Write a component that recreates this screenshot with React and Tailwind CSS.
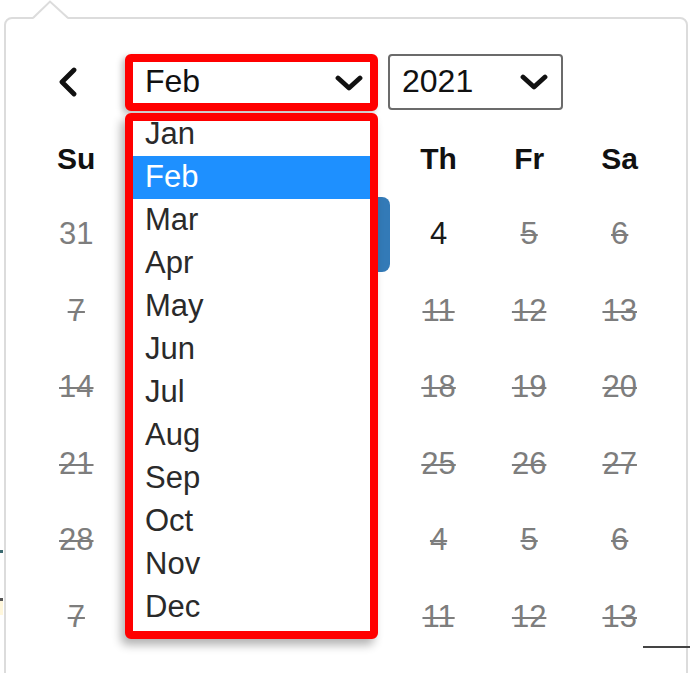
import React from 'react'

const months = ['Jan', 'Feb', 'Mar', 'Apr', 'May', 'Jun', 'Jul', 'Aug', 'Sep', 'Oct', 'Nov', 'Dec']
// Mo, Tu, We sit under the open month list
const dayNames = [['Su', true], ['Mo', false], ['Tu', false], ['We', false], ['Th', true], ['Fr', true], ['Sa', true]]

// o = outside month (gray, enabled), x = disabled (struck), s = selected, h = under the open list
const weeks = [
  [['31', 'o'], ['1', 'h'], ['2', 'h'], ['3', 's'], ['4', ''], ['5', 'x'], ['6', 'x']],
  [['7', 'x'], ['8', 'h'], ['9', 'h'], ['10', 'h'], ['11', 'x'], ['12', 'x'], ['13', 'x']],
  [['14', 'x'], ['15', 'h'], ['16', 'h'], ['17', 'h'], ['18', 'x'], ['19', 'x'], ['20', 'x']],
  [['21', 'x'], ['22', 'h'], ['23', 'h'], ['24', 'h'], ['25', 'x'], ['26', 'x'], ['27', 'x']],
  [['28', 'x'], ['1', 'h'], ['2', 'h'], ['3', 'h'], ['4', 'x'], ['5', 'x'], ['6', 'x']],
  [['7', 'x'], ['8', 'h'], ['9', 'h'], ['10', 'h'], ['11', 'x'], ['12', 'x'], ['13', 'x']],
]

function Chevron({ className }) {
  return (
    <svg viewBox="0 0 28 16" className={className} fill="none" stroke="#111" strokeWidth="4.8" strokeLinecap="round" strokeLinejoin="round">
      <path d="M3 3 L14 13 L25 3" />
    </svg>
  )
}

function Day({ text, kind }) {
  if (kind === 's') {
    return (
      <div className="mx-[3px] h-[75px] rounded-lg bg-[#337ab7] flex items-center justify-center text-white">
        {text}
      </div>
    )
  }
  if (kind === 'h') return <div className="h-full" />
  let cls = 'text-[#1a1a1a]'
  if (kind === 'o') cls = 'text-[#7d7d7d]'
  if (kind === 'x') cls = 'text-[#7d7d7d] line-through decoration-[#7d7d7d] decoration-2'
  return (
    <div className="h-full flex items-center justify-center">
      <span className={cls}>{text}</span>
    </div>
  )
}

export default function App() {
  return (
    <div className="relative w-[690px] h-[673px] bg-white overflow-hidden font-['Liberation_Sans',Arial,sans-serif]">
      <div className="ml-[4px] mt-[17px] w-[684px] h-[700px] border-2 border-[#dcdcdc] rounded-lg bg-white">
        <div className="flex items-start pt-[35px] pl-[51px]">
          <svg viewBox="0 0 22 30" className="w-[22px] h-[30px] mt-[13px]" fill="none" stroke="#111" strokeWidth="4.8" strokeLinecap="round" strokeLinejoin="round">
            <path d="M17 3 L5 15 L17 27" />
          </svg>
          <div className="ml-[46px] w-[253px] h-[57px] border-[8px] border-[#ff0000] rounded-md bg-white flex items-center justify-between pl-[12px] pr-[7px] shadow-[-3px_3px_6px_rgba(0,0,0,0.25)]">
            <span className="text-[32px] text-[#111] leading-none pb-[3px]">Feb</span>
            <Chevron className="w-[28px] h-[16px]" />
          </div>
          <div className="ml-[10px] w-[175px] h-[56px] border-2 border-[#6b6b6b] rounded flex items-center justify-between pl-[12px] pr-[13px]">
            <span className="text-[32px] text-[#111] leading-none pb-[2px]">2021</span>
            <Chevron className="w-[28px] h-[16px]" />
          </div>
        </div>

        <div className="ml-[25px] w-[634px] mt-[25px]">
          <div className="grid grid-cols-7 h-[36px] items-center text-[30px] font-bold text-[#111]">
            {dayNames.map(([d, shown]) => (
              <div key={d} className="text-center">{shown ? d : ''}</div>
            ))}
          </div>
          <div className="mt-[24px] text-[31px]">
            {weeks.map((w, i) => (
              <div key={i} className="grid grid-cols-7 h-[76.5px] items-center">
                {w.map(([t, k], j) => (
                  <Day key={j} text={t} kind={k} />
                ))}
              </div>
            ))}
          </div>
        </div>
      </div>

      {/* popup arrow */}
      <svg className="absolute left-0 top-0 w-[100px] h-[22px]" viewBox="0 0 100 22">
        <polygon points="33,19 50,1.5 68,19" fill="#fff" />
        <polyline points="33,18 50,1.5 68,18" fill="none" stroke="#dcdcdc" strokeWidth="2" />
      </svg>

      {/* open month list */}
      <div className="absolute left-[125px] top-[113px] w-[253px] h-[526px] border-[8px] border-[#ff0000] rounded-md bg-white overflow-hidden shadow-[-4px_6px_10px_rgba(0,0,0,0.3)]">
        <div className="-mt-[8px]">
          {months.map((m) => (
            <div
              key={m}
              className={
                m === 'Feb'
                  ? 'h-[43px] flex items-center pl-[12px] bg-[#1e90ff] text-white text-[31px]'
                  : 'h-[43px] flex items-center pl-[12px] text-[#2a2a2a] text-[31px]'
              }
            >
              {m}
            </div>
          ))}
        </div>
      </div>

      {/* stray marks at the edges of the capture */}
      <div className="absolute left-[643px] top-[646px] w-[47px] h-[2px] bg-[#444]" />
      <div className="absolute left-0 top-[550px] w-[3px] h-[3px] bg-[#3b6a70]" />
      <div className="absolute left-0 top-[598px] w-[3px] h-[3px] bg-[#555]" />
      <div className="absolute left-0 top-[601px] w-[3px] h-[14px] bg-[#fff7dc]" />
    </div>
  )
}
